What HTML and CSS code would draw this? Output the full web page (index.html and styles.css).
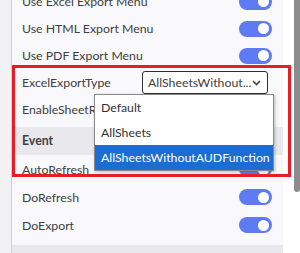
FILE: index.html
```html
<!DOCTYPE html>
<html>

<head>
    <meta http-equiv="content-type" content="text/html; charset=utf-8" />
    <title>Options</title>
    <link rel="stylesheet" href="styles.css">
</head>

<body>
    <div class="frame">
        <div class="gutter"></div>
        <div class="panel">
            <div class="group">
                <div class="row"><span class="label">Use Excel Export Menu</span><span class="toggle on"></span></div>
                <div class="row"><span class="label">Use HTML Export Menu</span><span class="toggle on"></span></div>
                <div class="row"><span class="label">Use PDF Export Menu</span><span class="toggle on"></span></div>
                <div class="row">
                    <span class="label">ExcelExportType</span>
                    <div class="select">
                        <span class="select-text">AllSheetsWithout...</span>
                        <svg class="chevron" width="9" height="6" viewBox="0 0 9 6"><polyline points="1,1 4.5,4.5 8,1" fill="none" stroke="#444" stroke-width="1.6"/></svg>
                    </div>
                </div>
                <div class="row"><span class="label">EnableSheetRename</span><span class="toggle on"></span></div>
            </div>

            <div class="group-header">Event</div>
            <div class="group last">
                <div class="row tall"><span class="label">AutoRefresh</span><span class="toggle on"></span></div>
                <div class="row tall"><span class="label">DoRefresh</span><span class="toggle on"></span></div>
                <div class="row tall"><span class="label">DoExport</span><span class="toggle on"></span></div>
            </div>
            <div class="group-header">Layout</div>
        </div>
        <div class="scrollbar"><div class="thumb"></div></div>
    </div>

    <!-- список выбора поверх строк -->
    <ul class="dropdown">
        <li>Default</li>
        <li>AllSheets</li>
        <li class="selected">AllSheetsWithoutAUDFunction</li>
    </ul>

    <!-- рамка выделения -->
    <div class="highlight"></div>
</body>

</html>
```

FILE: styles.css
```css
body {
    margin: 0;
    width: 300px;
    height: 253px;
    overflow: hidden;
    font-family: Lato, "Noto Sans", sans-serif;
    font-size: 12.3px;
    color: #404040;
    background: #fff;
}

.frame {
    display: flex;
    height: 253px;
    overflow: hidden;
}

.gutter {
    width: 11px;
    background: #f2f2f4;
    border-right: 1px solid #cfcfd4;
}

.panel {
    width: 271px;
    background: #f9f9fb;
    margin-top: -12px;
}

.group {
    padding-bottom: 4px;
}

.group.last {
    padding-bottom: 6px;
}

.row {
    display: flex;
    align-items: center;
    justify-content: space-between;
    height: 27px;
    padding: 0 11px 0 10px;
}

.row.tall {
    height: 28px;
}

.label {
    white-space: nowrap;
}

.toggle {
    position: relative;
    width: 33px;
    height: 16px;
    border-radius: 8px;
    background: #5f7bf3;
    flex: 0 0 auto;
}

.toggle::after {
    content: "";
    position: absolute;
    top: 2.5px;
    right: 3px;
    width: 11px;
    height: 11px;
    border-radius: 50%;
    background: #fff;
}

.select {
    display: flex;
    align-items: center;
    justify-content: space-between;
    box-sizing: border-box;
    width: 126px;
    height: 23px;
    margin-right: 4px;
    padding: 0 6px 0 5px;
    background: #fff;
    border: 1px solid #2e2e2e;
    border-radius: 3px;
}

.chevron {
    flex: 0 0 auto;
}

.group-header {
    height: 28px;
    line-height: 28px;
    padding-left: 10px;
    background: #e9e9ed;
    font-weight: bold;
}

.scrollbar {
    flex: 1;
    display: flex;
    justify-content: flex-end;
    background: #fff;
}

.thumb {
    width: 6px;
    height: 192px;
    background: #8c8c8c;
    border-radius: 0 0 3px 3px;
}

.dropdown {
    position: absolute;
    left: 94px;
    top: 94px;
    width: 178px;
    margin: 0;
    padding: 0;
    list-style: none;
    background: #fff;
    border: 1px solid #8a8a8a;
    box-shadow: 1px 1px 3px rgba(0, 0, 0, 0.25);
}

.dropdown li {
    height: 25px;
    line-height: 25px;
    padding-left: 6px;
    white-space: nowrap;
    color: #333;
}

.dropdown li.selected {
    background: #1b6dd3;
    color: #fff;
}

.highlight {
    position: absolute;
    left: 12px;
    top: 65px;
    width: 273px;
    height: 106px;
    border: 3px solid #e81d25;
}
```
